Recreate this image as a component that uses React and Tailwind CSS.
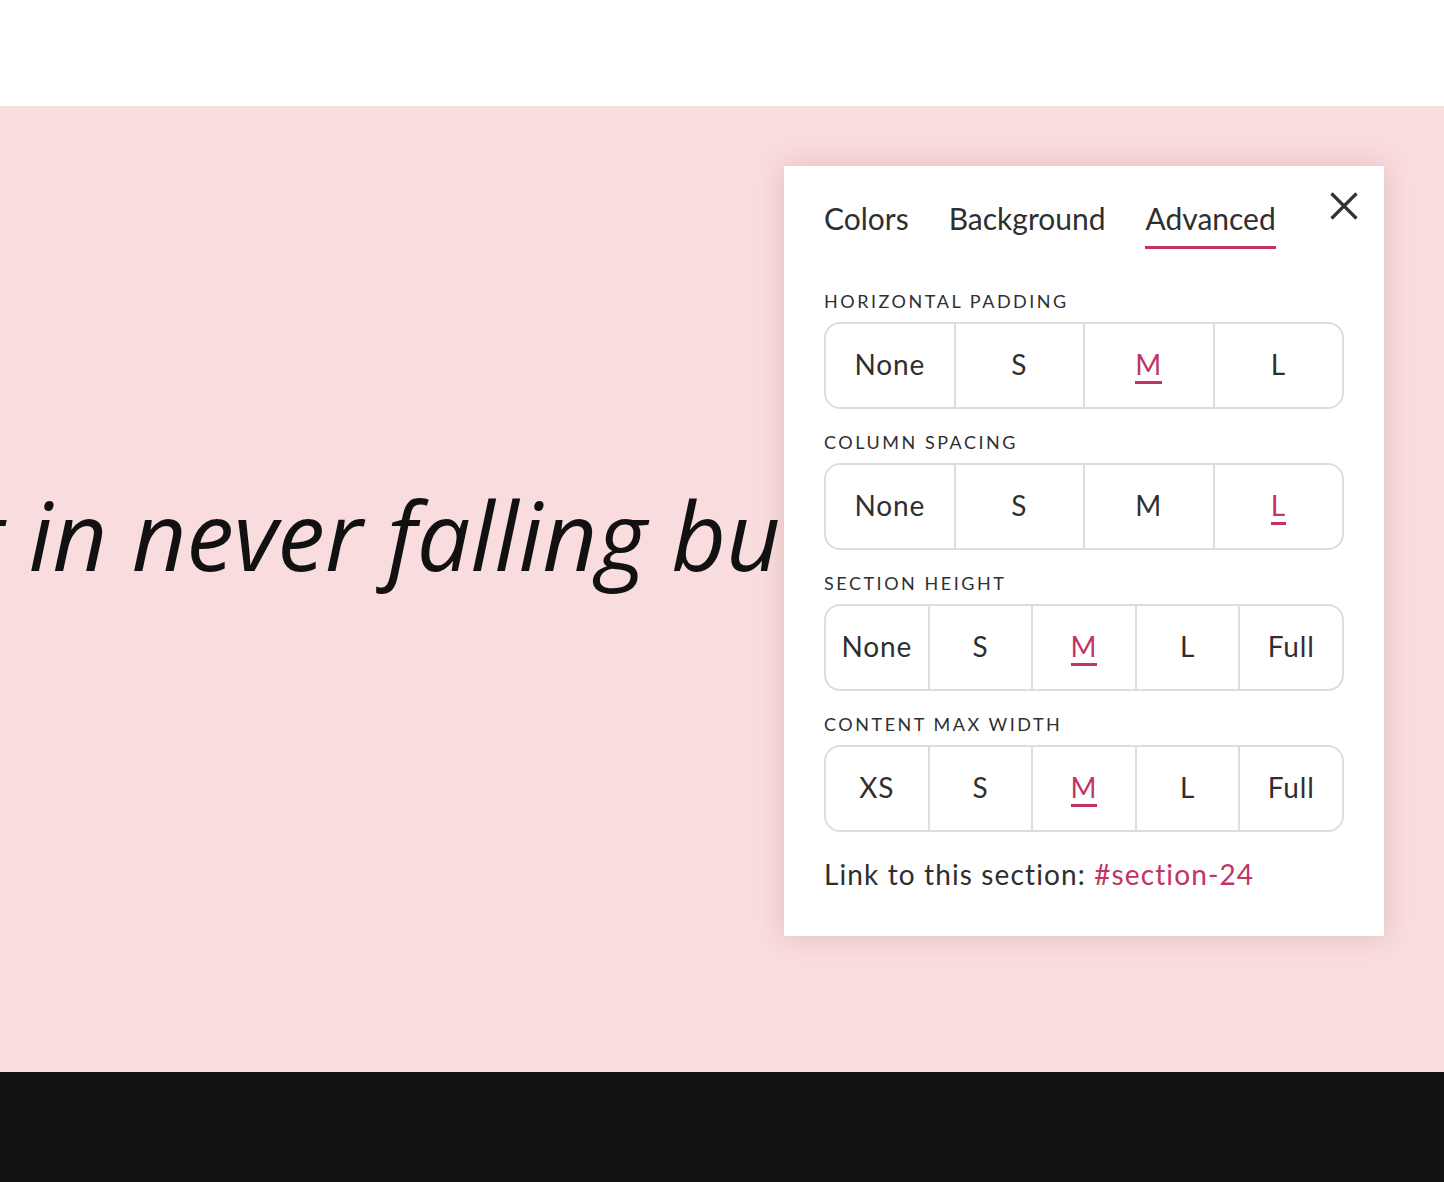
const groups = [
  { label: 'Horizontal padding', options: ['None', 'S', 'M', 'L'], active: 'M' },
  { label: 'Column spacing', options: ['None', 'S', 'M', 'L'], active: 'L' },
  { label: 'Section height', options: ['None', 'S', 'M', 'L', 'Full'], active: 'M' },
  { label: 'Content max width', options: ['XS', 'S', 'M', 'L', 'Full'], active: 'M' },
];

const tabs = ['Colors', 'Background', 'Advanced'];

function Segmented({ options, active }) {
  return (
    <div className="flex h-[87px] rounded-2xl border-2 border-[#dddddd] overflow-hidden">
      {options.map((opt, i) => (
        <button
          key={opt}
          className={`flex-1 flex items-center justify-center text-[28px] leading-[34px] tracking-[0.03em] ${i > 0 ? 'border-l-2 border-[#dddddd]' : ''}`}
        >
          <span
            className={
              opt === active
                ? 'text-[#c13463] border-b-[3px] border-[#c13463]'
                : 'text-[#2f2f2f] border-b-[3px] border-transparent'
            }
          >
            {opt}
          </span>
        </button>
      ))}
    </div>
  );
}

function SettingsPanel() {
  return (
    <div
      className="absolute top-[60px] right-[60px] w-[600px] bg-white px-10 pt-[34px] pb-[45px] shadow-[0_0_24px_rgba(120,60,70,0.18)] text-[#2f2f2f]"
      style={{ fontFamily: 'Lato, "Open Sans", sans-serif' }}
    >
      <div className="flex items-start justify-between">
        <div className="flex gap-[40px]">
          {tabs.map((t) => (
            <div
              key={t}
              className={`text-[30px] leading-[36px] pb-[10px] border-b-[3px] ${
                t === 'Advanced' ? 'border-[#c13463]' : 'border-transparent'
              }`}
            >
              {t}
            </div>
          ))}
        </div>
        <button className="-mt-[8px] -mr-[14px] text-[#333]">
          <svg width="28" height="28" viewBox="0 0 28 28" fill="none" stroke="currentColor" strokeWidth="3.2">
            <path d="M1.5 1.5 26.5 26.5M26.5 1.5 1.5 26.5" />
          </svg>
        </button>
      </div>

      {groups.map((g, i) => (
        <div key={g.label} className={i === 0 ? 'mt-[42px]' : 'mt-[23px]'}>
          <div className="text-[18px] leading-[20px] uppercase tracking-[0.14em] mb-[11px]">
            {g.label}
          </div>
          <Segmented options={g.options} active={g.active} />
        </div>
      ))}

      <p className="mt-[25px] text-[28px] leading-[34px] tracking-[0.04em]">
        Link to this section: <a href="#section-24" className="text-[#c13463]">#section-24</a>
      </p>
    </div>
  );
}

export default function App() {
  return (
    <div className="w-[1444px] min-h-[1182px] bg-white">
      <div className="h-[106px] bg-white" />
      <section className="relative h-[966px] bg-[#f9dcdd] overflow-hidden">
        <div className="w-[800px] overflow-hidden pb-[40px]">
          <div
            className="pt-[381px] whitespace-nowrap italic text-[95px] leading-none text-[#111] ml-[-1007px]"
            style={{ fontFamily: '"Open Sans", sans-serif' }}
          >
            Our greatest glory is not in never falling but in rising every time we fall.
          </div>
        </div>
        <SettingsPanel />
      </section>
      <footer className="h-[110px] bg-[#111111]" />
    </div>
  );
}
